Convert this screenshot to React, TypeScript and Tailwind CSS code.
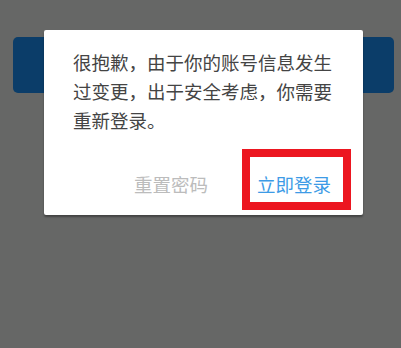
import React from 'react'

const font = { fontFamily: '"Noto Sans CJK SC", "Noto Sans", sans-serif' }

export default function App() {
  return (
    <div className="relative h-[348px] w-[401px] overflow-hidden bg-[#666766]" style={font}>
      {/* page behind the overlay */}
      <div className="ml-[13px] mr-[7px] mt-[37px] h-[56px] rounded-[5px] bg-[#0b3d69]" />

      {/* dialog */}
      <div className="absolute left-[44px] top-[30px] flex h-[185px] w-[319px] flex-col rounded-[2px] bg-white shadow-[0_2px_2px_rgba(0,0,0,0.35)]">
        <p className="pl-[29px] pr-[28px] pt-[18px] text-[18.5px] leading-[29px] text-[#444444]">
          很抱歉，由于你的账号信息发生过变更，出于安全考虑，你需要重新登录。
        </p>
        <div className="mt-auto mb-[17px] flex justify-end gap-[49px] pr-[32px]">
          <button className="text-[18.5px] leading-[28px] text-[#bcbcbc]">重置密码</button>
          <button className="text-[18.5px] leading-[28px] text-[#3d9be6]">立即登录</button>
        </div>
      </div>

      {/* red highlight annotation */}
      <div className="absolute left-[242px] top-[149px] h-[61px] w-[109px] border-[8px] border-[#ec1620]" />
    </div>
  )
}
